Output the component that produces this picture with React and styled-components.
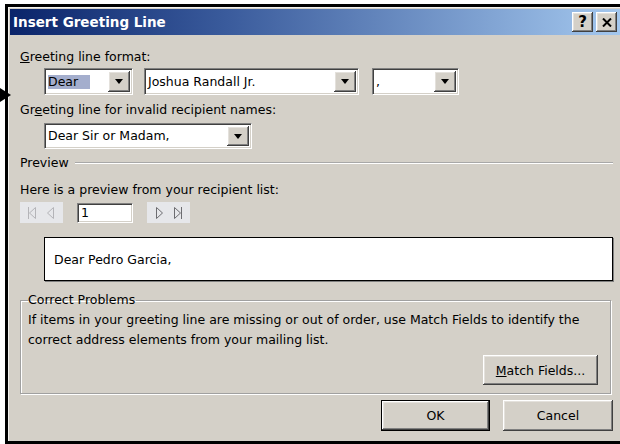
import styled, { createGlobalStyle } from "styled-components";

const GlobalStyle = createGlobalStyle`
  html, body {
    margin: 0;
    padding: 0;
    background: #ffffff;
    overflow: hidden;
  }
  body {
    font-family: "DejaVu Sans", Tahoma, sans-serif;
    font-size: 12.5px;
    color: #000;
  }
`;

const Page = styled.div`
  position: relative;
  width: 620px;
  height: 444px;
  overflow: hidden;
`;

// pointer sitting on the left edge of the window
const Pointer = styled.svg`
  position: absolute;
  left: 0;
  top: 86px;
`;

const Window = styled.div`
  box-sizing: border-box;
  margin: 4px 0 0 5px;
  width: 628px;
  height: 440px;
  border: 3px solid #000;
  background: #d4d0c8;
  padding: 2px;
  box-shadow: inset 1px 1px #f4f2ee;
  display: flex;
  flex-direction: column;
`;

const TitleBar = styled.div`
  height: 26px;
  display: flex;
  align-items: center;
  padding: 0 11px 0 3px;
  background: linear-gradient(to right, #0a246a 0%, #3a5b9c 35%, #a6caf0 100%);
`;

const Title = styled.div`
  flex: 1;
  color: #fff;
  font-weight: bold;
  font-size: 13.5px;
`;

const raised = `
  background: #d4d0c8;
  box-shadow: inset -1px -1px #404040, inset 1px 1px #ffffff,
    inset -2px -2px #808080, inset 2px 2px #e4e1dc;
`;

const sunken = `
  background: #fff;
  box-sizing: border-box;
  border: 1px solid;
  border-color: #808080 #ffffff #ffffff #808080;
  box-shadow: inset 1px 1px #404040, inset -1px -1px #d4d0c8;
`;

const CaptionButton = styled.div`
  ${raised}
  width: 21px;
  height: 20px;
  margin-left: 3px;
  display: flex;
  align-items: center;
  justify-content: center;
  font-weight: bold;
  font-size: 15px;
`;

const Body = styled.div`
  flex: 1;
  display: flex;
  flex-direction: column;
  padding: 15px 15px 0 10px;
`;

const Label = styled.div`
  line-height: 14px;
  margin-top: ${(p) => p.$top || 0}px;
`;

const Key = styled.span`
  text-decoration: underline;
`;

const Row = styled.div`
  display: flex;
  align-items: center;
  margin-top: ${(p) => p.$top || 0}px;
  padding-left: ${(p) => p.$indent || 0}px;
  gap: ${(p) => p.$gap || 0}px;
  line-height: 14px;
`;

const ComboBox = styled.div`
  ${sunken}
  width: ${(p) => p.$width}px;
  height: ${(p) => p.$height || 27}px;
  margin-left: ${(p) => p.$shift || 0}px;
  display: flex;
  align-items: center;
  padding: 2px;
`;

const ComboText = styled.div`
  flex: 1;
  padding-left: 1px;
  white-space: nowrap;
  overflow: hidden;
`;

const Selected = styled.span`
  background: #a4aecd;
  padding: 2px 12px 2px 0;
`;

const DropButton = styled.div`
  ${raised}
  width: 22px;
  align-self: stretch;
  display: flex;
  align-items: center;
  justify-content: center;
  &::after {
    content: "";
    border-left: 4px solid transparent;
    border-right: 4px solid transparent;
    border-top: 5px solid #000;
  }
`;

const Separator = styled.div`
  flex: 1;
  margin-left: 6px;
  border-top: 1px solid #a8a8a8;
  border-bottom: 1px solid #fff;
`;

const NavGroup = styled.div`
  width: 43px;
  height: 21px;
  background: #e6e7ea;
  display: flex;
  align-items: center;
  justify-content: space-around;
  padding: 0 3px;
  box-sizing: border-box;
`;

const RecordInput = styled.div`
  ${sunken}
  width: 56px;
  height: 20px;
  padding: 2px 3px;
  line-height: 14px;
`;

const PreviewBox = styled.div`
  margin: 14px 0 0 24px;
  height: 44px;
  box-sizing: border-box;
  background: #fff;
  border: 1px solid #000;
  box-shadow: 1px 1px #808080;
  display: flex;
  align-items: center;
  padding-left: 9px;
`;

const GroupBox = styled.fieldset`
  margin: 12px 2px 0 0;
  padding: 3px 12px 8px 7px;
  border: 1px solid #a0a0a0;
  box-shadow: 1px 1px #fff, inset 1px 1px #fff;
  display: flex;
  flex-direction: column;
`;

const Legend = styled.legend`
  padding: 0 1px 0 0;
  margin-left: 0;
  line-height: 14px;
`;

const Note = styled.p`
  margin: 0;
  line-height: 20px;
`;

const PushButton = styled.div`
  ${raised}
  box-sizing: border-box;
  width: ${(p) => p.$width}px;
  height: ${(p) => p.$height || 31}px;
  display: flex;
  align-items: center;
  justify-content: center;
  ${(p) => p.$default && "border: 1px solid #000;"}
`;

const ButtonRow = styled.div`
  display: flex;
  justify-content: flex-end;
  gap: 13px;
  margin-top: ${(p) => p.$top || 0}px;
`;

function NavIcon({ dir, bar, color }) {
  const tri = dir === "left" ? "8,1 2,6.5 8,12" : "2,1 8,6.5 2,12";
  const barX = dir === "left" ? 1 : 9;
  return (
    <svg width="11" height="14" viewBox="0 0 11 14">
      <polygon points={tri} fill="none" stroke={color} strokeWidth="1" transform="translate(0.5 0.5)" />
      {bar && <line x1={barX + 0.5} y1="1" x2={barX + 0.5} y2="13" stroke={color} strokeWidth="1" />}
    </svg>
  );
}

export default function App() {
  return (
    <>
      <GlobalStyle />
      <Page>
        <Window>
          <TitleBar>
            <Title>Insert Greeting Line</Title>
            <CaptionButton>?</CaptionButton>
            <CaptionButton>
              <svg width="10" height="9" viewBox="0 0 10 9">
                <path d="M1 0.5 L9 8.5 M9 0.5 L1 8.5" stroke="#000" strokeWidth="2" />
              </svg>
            </CaptionButton>
          </TitleBar>

          <Body>
            <Label>
              <Key>G</Key>reeting line format:
            </Label>
            <Row $top={4} $indent={24} $gap={11}>
              <ComboBox $width={89}>
                <ComboText>
                  <Selected>Dear</Selected>
                </ComboText>
                <DropButton />
              </ComboBox>
              <ComboBox $width={215}>
                <ComboText>Joshua Randall Jr.</ComboText>
                <DropButton />
              </ComboBox>
              <ComboBox $width={87} $shift={2}>
                <ComboText>,</ComboText>
                <DropButton />
              </ComboBox>
            </Row>

            <Label $top={8}>
              Gr<Key>e</Key>eting line for invalid recipient names:
            </Label>
            <Row $top={6} $indent={24}>
              <ComboBox $width={208} $height={26}>
                <ComboText>Dear Sir or Madam,</ComboText>
                <DropButton />
              </ComboBox>
            </Row>

            <Row $top={7}>
              <span>Preview</span>
              <Separator />
            </Row>

            <Label $top={13}>Here is a preview from your recipient list:</Label>
            <Row $top={5} $gap={14}>
              <NavGroup>
                <NavIcon dir="left" bar color="#b4b4b8" />
                <NavIcon dir="left" color="#b4b4b8" />
              </NavGroup>
              <RecordInput>1</RecordInput>
              <NavGroup>
                <NavIcon dir="right" color="#6c6c70" />
                <NavIcon dir="right" bar color="#6c6c70" />
              </NavGroup>
            </Row>

            <PreviewBox>Dear Pedro Garcia,</PreviewBox>

            <GroupBox>
              <Legend>Correct Problems</Legend>
              <Note>
                If items in your greeting line are missing or out of order, use Match Fields to identify the
                <br />
                correct address elements from your mailing list.
              </Note>
              <ButtonRow $top={5}>
                <PushButton $width={115} $height={30}>
                  <span>
                    <Key>M</Key>atch Fields...
                  </span>
                </PushButton>
              </ButtonRow>
            </GroupBox>

            <ButtonRow $top={6}>
              <PushButton $width={109} $default>
                OK
              </PushButton>
              <PushButton $width={110}>Cancel</PushButton>
            </ButtonRow>
          </Body>
        </Window>

        <Pointer width="12" height="18" viewBox="0 0 12 18">
          <polygon points="0,2 11,9 0,16" fill="#000" />
        </Pointer>
      </Page>
    </>
  );
}
